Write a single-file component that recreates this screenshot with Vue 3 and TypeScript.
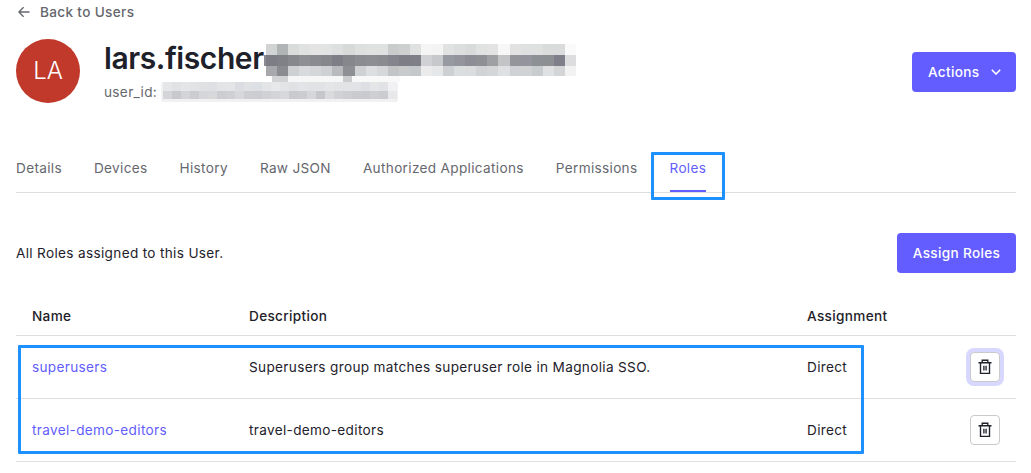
<script setup lang="ts">
interface Role { name: string; description: string; assignment: string; focused: boolean }
interface Cell { x: number; y: number; w: number; h: number; fill: string }

const tabs: string[] = ['Details', 'Devices', 'History', 'Raw JSON', 'Authorized Applications', 'Permissions', 'Roles']
const roles: Role[] = [
  { name: 'superusers', description: 'Superusers group matches superuser role in Magnolia SSO.', assignment: 'Direct', focused: true },
  { name: 'travel-demo-editors', description: 'travel-demo-editors', assignment: 'Direct', focused: false },
]

function strip(x: number, y: number, w: number, h: number, colors: string): Cell[] {
  return colors.split(' ').map((c, i) => ({ x: x + i * w, y, w, h, fill: '#' + c }))
}

// Mosaic that hides the private part of the account name
const nameMosaic: Cell[] = [
  ...strip(0, 0, 11.07, 11, 'd2d4d4 b1b4b4 dadcdb e0e2e1 e3e4e3 e2e3e3 dee0df d8dad9 dde0df e0e2e2 e0e2e1 c9cccb cdd0cf dfe2e1 f5f5f5 f4f4f4 e1e2e2 dddfde d9dbda e0e2e1 e2e3e2 f7f7f7 e1e2e1 dfe1e0 dfe1e0 d9dcdb d9dcdb fafafa'),
  ...strip(0, 11, 11.07, 11, '7d7e85 808187 86888d 8d8f93 8a8b90 86878c 7e7f86 86878d 8b8c92 8c8e93 8b8c92 85868d 7e7f86 7e7f87 d0d1d4 c7c8cb 989aa1 94959c 8c8d95 8e9096 9ea0a4 c2c4c6 93959b 94959c 8d9196 8c9092 7e7f88 dddddf'),
  ...strip(0, 22, 11.07, 10, 'a6a8ac 8b8c91 cfd0d2 d9dadc d4d6d8 cfd0d3 b9babd 8e8f94 d0d1d3 dddedf d6d7d9 c2c4c5 c8cacc c5c8ca ebebeb e6e7e8 cecfd2 dbdedf dadcdd d1d3d5 d4d6d8 dfe0e2 cfd1d4 d0d2d4 c9ccce dfe1e2 d4d5d7 f2f2f2'),
]
const idMosaic: Cell[] = [
  ...strip(2, 5, 9, 9, 'e5e6e7 e1e2e4 e4e5e7 e2e3e5 dfe1e3 dfe0e3 e3e4e6 e4e5e6 dcdde3 dfe1e2 dcdfe4 e3e4e6 e7e8ea e3e4e6 e0e1e3 e3e4e7 e1e2e4 e1e2e5 e4e5e6 e2e3e5 e2e3e5 e2e3e6 dddfe4 e4e5e7 e1e2e5 f1f1f3'),
  ...strip(2, 14, 9, 8, 'd4d5d8 c8c9cc d3d4d7 cbccd0 d4d6da d6d8da cccdd0 ced0d3 d7d8dc ccced1 cccdd1 d0d1d4 d3d5d8 d6d8db c9cacd cbccce d6d7da c6c7ca d9dbdd d0d2d5 ccced1 c9cbce c9cbcf cdcfd2 cbccd0 e7e8ea'),
]
</script>

<template>
  <main class="page">
    <a class="back">
      <svg width="12" height="12" viewBox="0 0 12 12"><path d="M11.5 6H1M5.6 1.3L.9 6l4.7 4.7" /></svg>
      <span>Back to Users</span>
    </a>
    <header class="profile">
      <div class="avatar">LA</div>
      <div class="identity">
        <h1>lars.fischer</h1>
        <p>user_id:</p>
        <svg class="mosaic id" width="237" height="25" viewBox="0 0 237 25" shape-rendering="crispEdges">
          <rect y="5" width="237" height="20" rx="3" fill="#f1f1f2" />
          <rect v-for="(c, i) in idMosaic" :key="i" :x="c.x" :y="c.y" :width="c.w" :height="c.h" :fill="c.fill" />
        </svg>
        <svg class="mosaic name" width="313" height="38" viewBox="-2 0 313 38" shape-rendering="crispEdges">
          <rect x="-2" y="11" width="2" height="11" fill="#8b8c91" />
          <rect v-for="(c, i) in nameMosaic" :key="i" :x="c.x" :y="c.y" :width="c.w" :height="c.h" :fill="c.fill" />
          <rect x="6" y="32" width="16" height="6" fill="#d2d3d4" />
          <rect x="22" y="32" width="55" height="6" fill="#f6f6f6" />
          <rect x="77" y="32" width="9" height="6" fill="#cbcccd" />
          <rect x="86" y="32" width="48" height="6" fill="#f8f8f8" />
        </svg>
      </div>
      <button class="primary actions">Actions
        <svg width="10" height="6" viewBox="0 0 10 6"><path d="M.8.8L5 5 9.2.8" /></svg>
      </button>
    </header>
    <nav class="tabs">
      <a v-for="tab in tabs" :key="tab" :class="{ active: tab === 'Roles' }">{{ tab }}</a>
    </nav>
    <section class="intro">
      <p>All Roles assigned to this User.</p>
      <button class="primary assign">Assign Roles</button>
    </section>
    <section class="table">
      <div class="row head"><span>Name</span><span>Description</span><span>Assignment</span></div>
      <div v-for="role in roles" :key="role.name" class="row">
        <a>{{ role.name }}</a><span>{{ role.description }}</span><span>{{ role.assignment }}</span>
        <button class="trash" :class="{ focused: role.focused }" aria-label="Remove role">
          <svg width="14" height="16" viewBox="0 0 14 16"><path d="M.5 3.7h13M4.2 3.4V1.2h5.6v2.2M2.5 4V14.3h9V4M5.9 6.7v4.8M8.1 6.7v4.8" /></svg>
        </button>
      </div>
      <div class="outline rows-outline"></div>
    </section>
    <div class="outline tab-outline"></div>
  </main>
</template>

<style>
body { background: #fff; }
</style>

<style scoped>
.page { position: relative; box-sizing: border-box; width: 1031px; height: 473px; overflow: hidden; padding: 2px 15px 0 16px; font: 400 13.6px/20px Inter, "Liberation Sans", sans-serif; letter-spacing: .33px; color: #1e212a; }
svg { display: block; }
svg path { fill: none; stroke: currentColor; stroke-width: 1.35; }
h1, p { margin: 0; }
.back { display: flex; align-items: center; height: 20px; gap: 10px; padding-left: 2px; color: #65676e; font-weight: 500; }
.profile { display: flex; height: 64px; margin-top: 17px; align-items: center; }
.avatar { width: 64px; height: 64px; border-radius: 50%; background: #c0392b; color: #fff; font-size: 24px; line-height: 64px; text-align: center; letter-spacing: 0; font-weight: 300; }
.identity { position: relative; flex: 1; height: 64px; margin-left: 24px; }
h1 { font-size: 30px; line-height: 38px; font-weight: 600; letter-spacing: -.42px; }
.identity p { line-height: 20px; margin-top: 5px; color: #65676e; }
.mosaic { position: absolute; }
.mosaic.id { left: 57px; top: 38px; }
.mosaic.name { left: 160px; top: 5px; }
.primary { height: 40px; border: 0; border-radius: 4px; padding: 0 16px; background: #635dff; color: #fff; font: inherit; font-weight: 500; letter-spacing: .34px; white-space: nowrap; }
.actions { display: flex; align-items: center; justify-content: space-between; width: 104px; padding-right: 15px; margin-top: 2px; }
.actions path { stroke-width: 1.6; }
.assign { width: 119px; padding: 0; }
.tabs { display: flex; gap: 32px; margin-top: 41px; height: 48px; border-bottom: 1px solid #dfdfe1; color: #65676e; }
.tabs a { box-sizing: border-box; height: 48px; padding-top: 14px; }
.tabs .active { color: #635dff; border-bottom: 2px solid #635dff; }
.intro { display: flex; align-items: center; justify-content: space-between; height: 40px; margin-top: 40px; }
.table { position: relative; margin-top: 24px; }
.row { display: grid; grid-template-columns: 217px 558px 163px 30px; align-items: center; height: 62px; padding-left: 16px; border-bottom: 1px solid #dfdfe1; }
.row.head { height: 38px; font-weight: 500; }
.row a { color: #635dff; }
.trash { display: grid; place-items: center; box-sizing: border-box; width: 30px; height: 30px; padding: 0; border: 1px solid #c9cace; border-radius: 4px; background: #fff; color: #1e212a; }
.trash.focused { box-shadow: 0 0 0 4px #d8d7ff; }
.outline { position: absolute; box-sizing: border-box; border: 3px solid #1e90ff; pointer-events: none; border-radius: 1px; }
.rows-outline { left: 2px; top: 48px; width: 846px; height: 109px; }
.tab-outline { left: 651px; top: 152px; width: 74px; height: 48px; }
</style>
